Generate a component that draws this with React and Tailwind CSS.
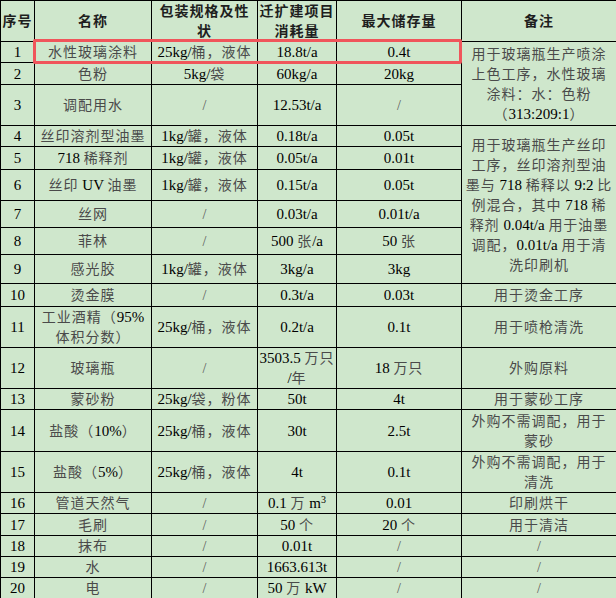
import React from "react";

const SPLIT = /([\u2E80-\u9FFF\u3000-\u303F\uFF00-\uFFEF]+)/;

function Txt({ s, head }) {
  if (s === "/") return <span className="text-[#5a5a5a] text-[14px] leading-none">/</span>;
  const parts = s.split(SPLIT);
  return parts.map((p, i) =>
    i % 2 === 1 ? (
      <span
        key={i}
        className={
          head
            ? "text-[14px] leading-none tracking-[1px] text-[#1e1e1e] font-bold"
            : "text-[14px] leading-none tracking-[1px] text-[#4a4a4a]"
        }
      >
        {p}
      </span>
    ) : (
      <span key={i}>{p}</span>
    )
  );
}

function Line({ children }) {
  return <div className="h-[20px] leading-[20px] whitespace-nowrap overflow-visible">{children}</div>;
}

function Cell({ v, head }) {
  if (v === null || v === undefined) return null;
  if (typeof v === "string")
    return (
      <Line>
        <Txt s={v} head={head} />
      </Line>
    );
  if (Array.isArray(v))
    return v.map((line, i) => (
      <Line key={i}>
        <Txt s={line} head={head} />
      </Line>
    ));
  return <Line>{v}</Line>;
}

const gas = (
  <span>
    0.1 <span className="text-[14px] leading-none tracking-[1px] text-[#4a4a4a]">万</span> m
    <span className="inline-block align-top text-[10px] leading-[12px] relative top-[1px]">3</span>
  </span>
);

const rows = [
  { h: "h-[21px]", c: ["1", "水性玻璃涂料", "25kg/桶，液体", "18.8t/a", "0.4t"], r: { span: 3, v: ["用于玻璃瓶生产喷涂", "上色工序，水性玻璃", "涂料：水：色粉", "（313:209:1）"] } },
  { h: "h-[22px]", c: ["2", "色粉", "5kg/袋", "60kg/a", "20kg"] },
  { h: "h-[41px]", c: ["3", "调配用水", "/", "12.53t/a", "/"] },
  { h: "h-[21px]", c: ["4", "丝印溶剂型油墨", "1kg/罐，液体", "0.18t/a", "0.05t"], r: { span: 6, v: ["用于玻璃瓶生产丝印", "工序，丝印溶剂型油", "墨与 718 稀释以 9:2 比", "例混合，其中 718 稀", "释剂 0.04t/a 用于油墨", "调配，0.01t/a 用于清", "洗印刷机"] } },
  { h: "h-[23px]", c: ["5", "718 稀释剂", "1kg/罐，液体", "0.05t/a", "0.01t"] },
  { h: "h-[31px]", c: ["6", "丝印 UV 油墨", "1kg/罐，液体", "0.15t/a", "0.05t"] },
  { h: "h-[27px]", c: ["7", "丝网", "/", "0.03t/a", "0.01t/a"] },
  { h: "h-[27px]", c: ["8", "菲林", "/", "500 张/a", "50 张"] },
  { h: "h-[29px]", c: ["9", "感光胶", "1kg/罐，液体", "3kg/a", "3kg"] },
  { h: "h-[23px]", c: ["10", "烫金膜", "/", "0.3t/a", "0.03t"], r: { span: 1, v: "用于烫金工序" } },
  { h: "h-[41px]", c: ["11", ["工业酒精（95%", "体积分数）"], "25kg/桶，液体", "0.2t/a", "0.1t"], r: { span: 1, v: "用于喷枪清洗" } },
  { h: "h-[41px]", c: ["12", "玻璃瓶", "/", ["3503.5 万只", "/年"], "18 万只"], r: { span: 1, v: "外购原料" } },
  { h: "h-[20px]", c: ["13", "蒙砂粉", "25kg/袋，粉体", "50t", "4t"], r: { span: 1, v: "用于蒙砂工序" } },
  { h: "h-[42px]", c: ["14", "盐酸（10%）", "25kg/桶，液体", "30t", "2.5t"], r: { span: 1, v: ["外购不需调配，用于", "蒙砂"] } },
  { h: "h-[41px]", c: ["15", "盐酸（5%）", "25kg/桶，液体", "4t", "0.1t"], r: { span: 1, v: ["外购不需调配，用于", "清洗"] } },
  { h: "h-[20px]", c: ["16", "管道天然气", "/", gas, "0.01"], r: { span: 1, v: "印刷烘干" } },
  { h: "h-[22px]", c: ["17", "毛刷", "/", "50 个", "20 个"], r: { span: 1, v: "用于清洁" } },
  { h: "h-[21px]", c: ["18", "抹布", "/", "0.01t", "/"], r: { span: 1, v: "/" } },
  { h: "h-[21px]", c: ["19", "水", "/", "1663.613t", "/"], r: { span: 1, v: "/" } },
  { h: "h-[21px]", c: ["20", "电", "/", "50 万 kW", "/"], r: { span: 1, v: "/" } },
];

const td = "border border-black text-center align-middle p-0 leading-[20px]";

export default function App() {
  return (
    <div className="w-[616px] h-[598px] bg-white font-['Liberation_Serif','Noto_Sans_CJK_SC',serif] text-[15px] text-black">
      <div className="relative w-[616px]">
        <table className="table-fixed border-collapse w-[616px] bg-[#cfe7cc]">
          <colgroup>
            <col className="w-[34px]" />
            <col className="w-[117px]" />
            <col className="w-[106px]" />
            <col className="w-[79px]" />
            <col className="w-[125px]" />
            <col className="w-[155px]" />
          </colgroup>
          <tbody>
            <tr className="h-[41px]">
              <td className={td}><Cell v="序号" head /></td>
              <td className={td}><Cell v="名称" head /></td>
              <td className={td}><Cell v={["包装规格及性", "状"]} head /></td>
              <td className={td}><Cell v={["迁扩建项目", "消耗量"]} head /></td>
              <td className={td}><Cell v="最大储存量" head /></td>
              <td className={td}><Cell v="备注" head /></td>
            </tr>
            {rows.map((row, i) => (
              <tr key={i} className={row.h}>
                {row.c.map((v, j) => (
                  <td key={j} className={td}>
                    <Cell v={v} />
                  </td>
                ))}
                {row.r && (
                  <td className={td} rowSpan={row.r.span}>
                    <Cell v={row.r.v} />
                  </td>
                )}
              </tr>
            ))}
          </tbody>
        </table>
        <div className="absolute left-[33px] top-[39px] w-[429px] h-[25px] border-[3px] border-[#f0555b] rounded-[2px] pointer-events-none" />
      </div>
    </div>
  );
}
